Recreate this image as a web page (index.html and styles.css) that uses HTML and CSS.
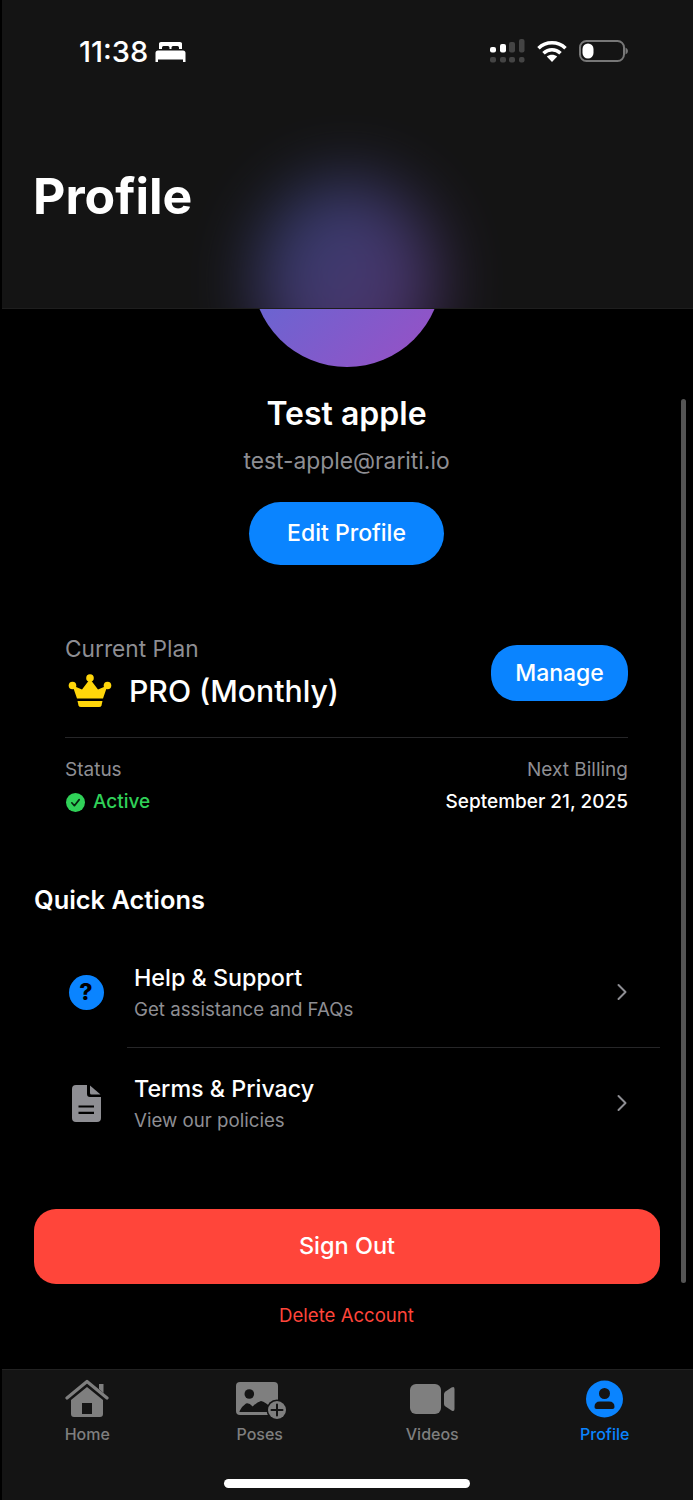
FILE: index.html
```html
<!DOCTYPE html>
<html lang="en">
<head>
    <meta charset="UTF-8">
    <meta name="viewport" content="width=device-width, initial-scale=1.0">
    <title>Profile</title>
    <link rel="stylesheet" href="styles.css">
</head>
<body>
    <div class="screen">
        <header class="header">
            <div class="header-glow"></div>
            <div class="status-bar">
                <div class="status-left">
                    <span class="clock">11:38</span>
                    <svg class="bed-icon" width="31" height="20" viewBox="0 0 31 20">
                        <path fill="#fff" d="M4 1.5Q4 0 6 0H25Q27 0 27 1.500V7H24V5.500Q24 4 22.500 4H18Q16.500 4 16.500 5.500V7H14.500V5.500Q14.500 4 13 4H8.500Q7 4 7 5.500V7H4Z"/>
                        <path fill="#fff" d="M3 8.500H28Q30.500 8.500 30.500 11V20H28V17.500H3V20H.5V11Q.5 8.500 3 8.500Z"/>
                    </svg>
                </div>
                <div class="status-right">
                    <svg width="36" height="24" viewBox="0 0 36 24">
                        <rect x="1" y="8" width="6" height="5.500" rx="2" fill="#fff"/>
                        <rect x="11" y="5" width="6" height="8.500" rx="2" fill="#fff"/>
                        <rect x="20" y="3" width="6" height="10.500" rx="2" fill="#444"/>
                        <rect x="30" y="0" width="5.500" height="13.500" rx="2" fill="#444"/>
                        <rect x="1" y="18" width="6" height="5.500" rx="2" fill="#444"/>
                        <rect x="11" y="18" width="6" height="5.500" rx="2" fill="#444"/>
                        <rect x="20" y="18" width="6" height="5.500" rx="2" fill="#444"/>
                        <rect x="30" y="18" width="5.500" height="5.500" rx="2" fill="#444"/>
                    </svg>
                    <svg width="30" height="22" viewBox="0 0 30 22">
                        <path fill="none" stroke="#fff" stroke-width="3.600" d="M1.500 8.200C9 1 21 1 28.500 8.200"/>
                        <path fill="none" stroke="#fff" stroke-width="3.600" d="M6.500 13.200C11.500 8.500 18.500 8.500 23.500 13.200"/>
                        <path fill="#fff" d="M15 22L9.800 16.600C12.800 14 17.200 14 20.200 16.600Z"/>
                    </svg>
                    <svg width="49" height="22" viewBox="0 0 49 22">
                        <rect x="1" y="1" width="44" height="20" rx="6.500" fill="none" stroke="#777" stroke-width="2"/>
                        <rect x="3.500" y="3.500" width="11" height="15" rx="5.500" fill="#fff"/>
                        <path fill="#777" d="M46.500 7.500Q49 8.500 49 11T46.500 14.500Z"/>
                    </svg>
                </div>
            </div>
            <h1 class="page-title">Profile</h1>
        </header>

        <main class="content">
            <div class="avatar-clip"><div class="avatar"></div></div>
            <section class="user">
                <h2 class="user-name">Test apple</h2>
                <p class="user-email">test-apple@rariti.io</p>
                <button class="btn-edit">Edit Profile</button>
            </section>

            <section class="plan">
                <div class="plan-top">
                    <div>
                        <div class="plan-label">Current Plan</div>
                        <div class="plan-name">
                            <svg class="crown" width="45" height="34" viewBox="0 0 45 34">
                                <circle cx="22" cy="4" r="3.800" fill="#ffd60a"/>
                                <circle cx="4.500" cy="11.500" r="3.800" fill="#ffd60a"/>
                                <circle cx="39.500" cy="11.500" r="3.800" fill="#ffd60a"/>
                                <path fill="#ffd60a" d="M22 5L30 15.500L39.500 11.500L35 24.500H9L4.500 11.500L14 15.500Z"/>
                                <path fill="#ffd60a" d="M9.500 27H34.500L33.500 31.500Q33 33 31 33H13Q11 33 10.500 31.500Z"/>
                            </svg>
                            <span>PRO (Monthly)</span>
                        </div>
                    </div>
                    <button class="btn-manage">Manage</button>
                </div>
                <div class="plan-bottom">
                    <div>
                        <div class="meta-label">Status</div>
                        <div class="status-value">
                            <svg width="19" height="19" viewBox="0 0 19 19">
                                <circle cx="9.500" cy="9.500" r="9.500" fill="#30d158"/>
                                <path fill="none" stroke="#06240f" stroke-width="1.700" stroke-linecap="round" stroke-linejoin="round" d="M5.800 9.800L8.400 12.700L13.200 6.600"/>
                            </svg>
                            <span>Active</span>
                        </div>
                    </div>
                    <div class="billing">
                        <div class="meta-label">Next Billing</div>
                        <div class="billing-date">September 21, 2025</div>
                    </div>
                </div>
            </section>

            <section class="actions">
                <h3 class="actions-title">Quick Actions</h3>
                <div class="action-row">
                    <div class="action-icon"><span class="help-circle">?</span></div>
                    <div class="action-text">
                        <div class="action-name">Help &amp; Support</div>
                        <div class="action-sub">Get assistance and FAQs</div>
                    </div>
                    <svg class="chevron" width="12" height="18" viewBox="0 0 12 18"><path fill="none" stroke="#8e8e93" stroke-width="2" stroke-linecap="round" stroke-linejoin="round" d="M2.500 2L9.500 9L2.500 16"/></svg>
                </div>
                <div class="action-divider"></div>
                <div class="action-row">
                    <div class="action-icon">
                        <svg width="29" height="37" viewBox="0 0 29 37">
                            <path fill="#8e8e93" d="M4 0H15V9Q15 12 18 12H29V33Q29 37 25 37H4Q0 37 0 33V4Q0 0 4 0Z"/>
                            <path fill="#8e8e93" d="M18 0.500L28.500 9.500H19.500Q18 9.500 18 8Z"/>
                            <path fill="none" stroke="#000" stroke-width="2.200" d="M6.500 21.500H22M6.500 27.800H22"/>
                        </svg>
                    </div>
                    <div class="action-text">
                        <div class="action-name">Terms &amp; Privacy</div>
                        <div class="action-sub">View our policies</div>
                    </div>
                    <svg class="chevron" width="12" height="18" viewBox="0 0 12 18"><path fill="none" stroke="#8e8e93" stroke-width="2" stroke-linecap="round" stroke-linejoin="round" d="M2.500 2L9.500 9L2.500 16"/></svg>
                </div>
            </section>

            <button class="btn-signout">Sign Out</button>
            <div class="delete-link">Delete Account</div>
        </main>

        <nav class="tabbar">
            <div class="tab">
                <svg class="tab-icon" width="44" height="40" viewBox="0 0 44 40">
                    <path fill="#7f7f7f" d="M34 5H38.500V14L34 10Z"/>
                    <path fill="none" stroke="#7f7f7f" stroke-width="3.200" stroke-linecap="round" stroke-linejoin="round" d="M2 19L22 2.500L42 19"/>
                    <path fill="#7f7f7f" fill-rule="evenodd" d="M22 8L38 21V35Q38 38 35 38H9Q6 38 6 35V21ZM17 24V35H27V24Z"/>
                </svg>
                <span>Home</span>
            </div>
            <div class="tab">
                <svg class="tab-icon" width="56" height="40" viewBox="0 0 56 40">
                    <rect x="4" y="3" width="42" height="33" rx="4" fill="#7f7f7f"/>
                    <circle cx="17.300" cy="15" r="4.800" fill="#141414"/>
                    <path fill="#141414" d="M7.300 32.500Q10 27 14 24.500Q17 23.500 20.700 27.500Q25 23 29 22Q33 22.500 42 31V33H8Z"/>
                    <circle cx="45" cy="31" r="10.500" fill="#141414"/>
                    <circle cx="45" cy="31" r="9" fill="#7f7f7f"/>
                    <path fill="none" stroke="#141414" stroke-width="2" stroke-linecap="round" d="M45 25.500V36.500M39.500 31H50.500"/>
                </svg>
                <span>Poses</span>
            </div>
            <div class="tab">
                <svg class="tab-icon" width="46" height="40" viewBox="0 0 46 40">
                    <rect x="1" y="5" width="31" height="30" rx="6" fill="#7f7f7f"/>
                    <path fill="#7f7f7f" d="M35 15Q35 13.500 36.500 12.500L42.500 8.500Q45.500 7 45.500 10V30Q45.500 33 42.500 31.500L36.500 27.500Q35 26.500 35 25Z"/>
                </svg>
                <span>Videos</span>
            </div>
            <div class="tab tab-active">
                <svg class="tab-icon" width="37" height="40" viewBox="0 0 37 40">
                    <circle cx="18.500" cy="20" r="18.500" fill="#0a84ff"/>
                    <circle cx="18.500" cy="14.500" r="5.500" fill="#141414"/>
                    <path fill="#141414" d="M8.500 28Q8.500 22.500 14 22.500H23Q28.500 22.500 28.500 28Q28.500 30 26.500 30H10.500Q8.500 30 8.500 28Z"/>
                </svg>
                <span>Profile</span>
            </div>
            <div class="home-indicator"></div>
        </nav>

        <div class="scrollbar"></div>
    </div>
</body>
</html>
```

FILE: styles.css
```css
* {
    box-sizing: border-box;
}
body {
    margin: 0;
    background-color: #000;
    color: #fff;
    font-family: Inter, "Noto Sans", sans-serif;
}
h1, h2, h3, p {
    margin: 0;
}
button {
    border: none;
    color: #fff;
    font-family: inherit;
    padding: 0;
}
.screen {
    position: relative;
    width: 693px;
    height: 1500px;
    overflow: hidden;
    display: flex;
    flex-direction: column;
}

/* top bar */
.header {
    position: relative;
    height: 309px;
    margin-left: 2px;
    background-color: #141414;
    overflow: hidden;
    border-bottom: 1px solid #1e1e1e;
    flex-shrink: 0;
}
.header-glow {
    position: absolute;
    left: 255px;
    top: 180px;
    width: 180px;
    height: 200px;
    border-radius: 50%;
    background: linear-gradient(135deg, #4f70d8, #9b4fc4);
    filter: blur(34px);
    opacity: 0.48;
}
.status-bar {
    position: relative;
    display: flex;
    justify-content: space-between;
    align-items: center;
    padding: 37px 65px 0 77px;
}
.status-left {
    display: flex;
    align-items: center;
    gap: 7px;
}
.clock {
    font-size: 29px;
    font-weight: 500;
    line-height: 30px;
}
.status-right {
    display: flex;
    align-items: center;
    gap: 12px;
    margin-bottom: 2px;
}
.page-title {
    position: relative;
    margin: 99px 0 0 31px;
    font-size: 50px;
    font-weight: 700;
    line-height: 60px;
}

/* user block */
.content {
    flex: 1;
    display: flex;
    flex-direction: column;
}
.avatar-clip {
    height: 58px;
    overflow: hidden;
}
.avatar {
    width: 190px;
    height: 190px;
    margin: -132px auto 0;
    border-radius: 50%;
    background: linear-gradient(135deg, #4f70d8, #9b4fc4);
}
.user {
    display: flex;
    flex-direction: column;
    align-items: center;
}
.user-name {
    margin-top: 27px;
    font-size: 32px;
    font-weight: 600;
    line-height: 40px;
}
.user-email {
    margin-top: 13px;
    font-size: 22.800px;
    line-height: 28px;
    color: #8e8e93;
}
.btn-edit {
    width: 195px;
    height: 63px;
    margin-top: 27px;
    padding-bottom: 2px;
    border-radius: 32px;
    background-color: #0a84ff;
    font-size: 23px;
    font-weight: 500;
}

/* plan */
.plan {
    margin: 70px 65px 0;
}
.plan-top {
    display: flex;
    justify-content: space-between;
    align-items: center;
    padding-bottom: 27px;
    border-bottom: 1px solid #262628;
}
.plan-label {
    font-size: 22.700px;
    line-height: 28px;
    color: #8e8e93;
}
.plan-name {
    display: flex;
    align-items: center;
    gap: 16px;
    margin-top: 9px;
    font-size: 30.200px;
    font-weight: 500;
    line-height: 38px;
}
.crown {
    margin-left: 3px;
}
.btn-manage {
    width: 137px;
    height: 56px;
    border-radius: 26px;
    background-color: #0a84ff;
    font-size: 23px;
    font-weight: 500;
}
.plan-bottom {
    display: flex;
    justify-content: space-between;
    padding-top: 20px;
}
.meta-label {
    font-size: 19px;
    line-height: 24px;
    color: #8e8e93;
}
.status-value {
    display: flex;
    align-items: center;
    gap: 8px;
    margin-top: 8px;
    padding-left: 1px;
    font-size: 19px;
    font-weight: 500;
    line-height: 24px;
    color: #30d158;
}
.billing {
    text-align: right;
}
.billing-date {
    margin-top: 8px;
    font-size: 19px;
    font-weight: 500;
    line-height: 24px;
}

/* quick actions */
.actions {
    margin: 0 33px 0 34px;
}
.actions-title {
    margin-top: 69px;
    font-size: 25.400px;
    font-weight: 600;
    line-height: 34px;
}
.action-row {
    display: flex;
    align-items: center;
    height: 110px;
}
.actions-title + .action-row {
    margin-top: 20px;
}
.action-icon {
    display: flex;
    justify-content: center;
    align-items: center;
    width: 100px;
    flex-shrink: 0;
    padding-left: 4px;
}
.help-circle {
    display: flex;
    justify-content: center;
    align-items: center;
    width: 35px;
    height: 35px;
    border-radius: 50%;
    background-color: #0a84ff;
    color: #000;
    font-size: 23px;
    font-weight: 800;
}
.action-text {
    flex: 1;
    padding-top: 2px;
}
.action-name {
    font-size: 23.300px;
    font-weight: 500;
    line-height: 30px;
}
.action-sub {
    margin-top: 4px;
    font-size: 18.700px;
    line-height: 26px;
    color: #8e8e93;
}
.chevron {
    margin-right: 32px;
}
.action-divider {
    height: 1px;
    margin-left: 93px;
    background-color: #262628;
}

/* sign out */
.btn-signout {
    height: 75px;
    margin: 51px 33px 0 34px;
    padding-bottom: 2px;
    border-radius: 22px;
    background-color: #ff453a;
    font-size: 23.500px;
    font-weight: 500;
}
.delete-link {
    margin-top: 18px;
    text-align: center;
    font-size: 18.600px;
    line-height: 26px;
    color: #ff453a;
}

/* bottom tabs */
.tabbar {
    position: relative;
    display: grid;
    grid-template-columns: repeat(4, 172.500px);
    height: 131px;
    margin-left: 2px;
    background-color: #141414;
    border-top: 1px solid #222;
    flex-shrink: 0;
}
.tab {
    display: flex;
    flex-direction: column;
    align-items: center;
    margin-left: -2px;
    padding-top: 9px;
    font-size: 16px;
    font-weight: 500;
    line-height: 20px;
    color: #7f7f7f;
}
.tab-icon {
    margin-bottom: 5px;
}
.tab-active {
    color: #0a84ff;
}
.home-indicator {
    position: absolute;
    left: 222px;
    bottom: 12px;
    width: 246px;
    height: 9px;
    border-radius: 5px;
    background-color: #fff;
}
.scrollbar {
    position: absolute;
    left: 681px;
    top: 399px;
    width: 5px;
    height: 884px;
    border-radius: 3px;
    background-color: #555;
}
```
